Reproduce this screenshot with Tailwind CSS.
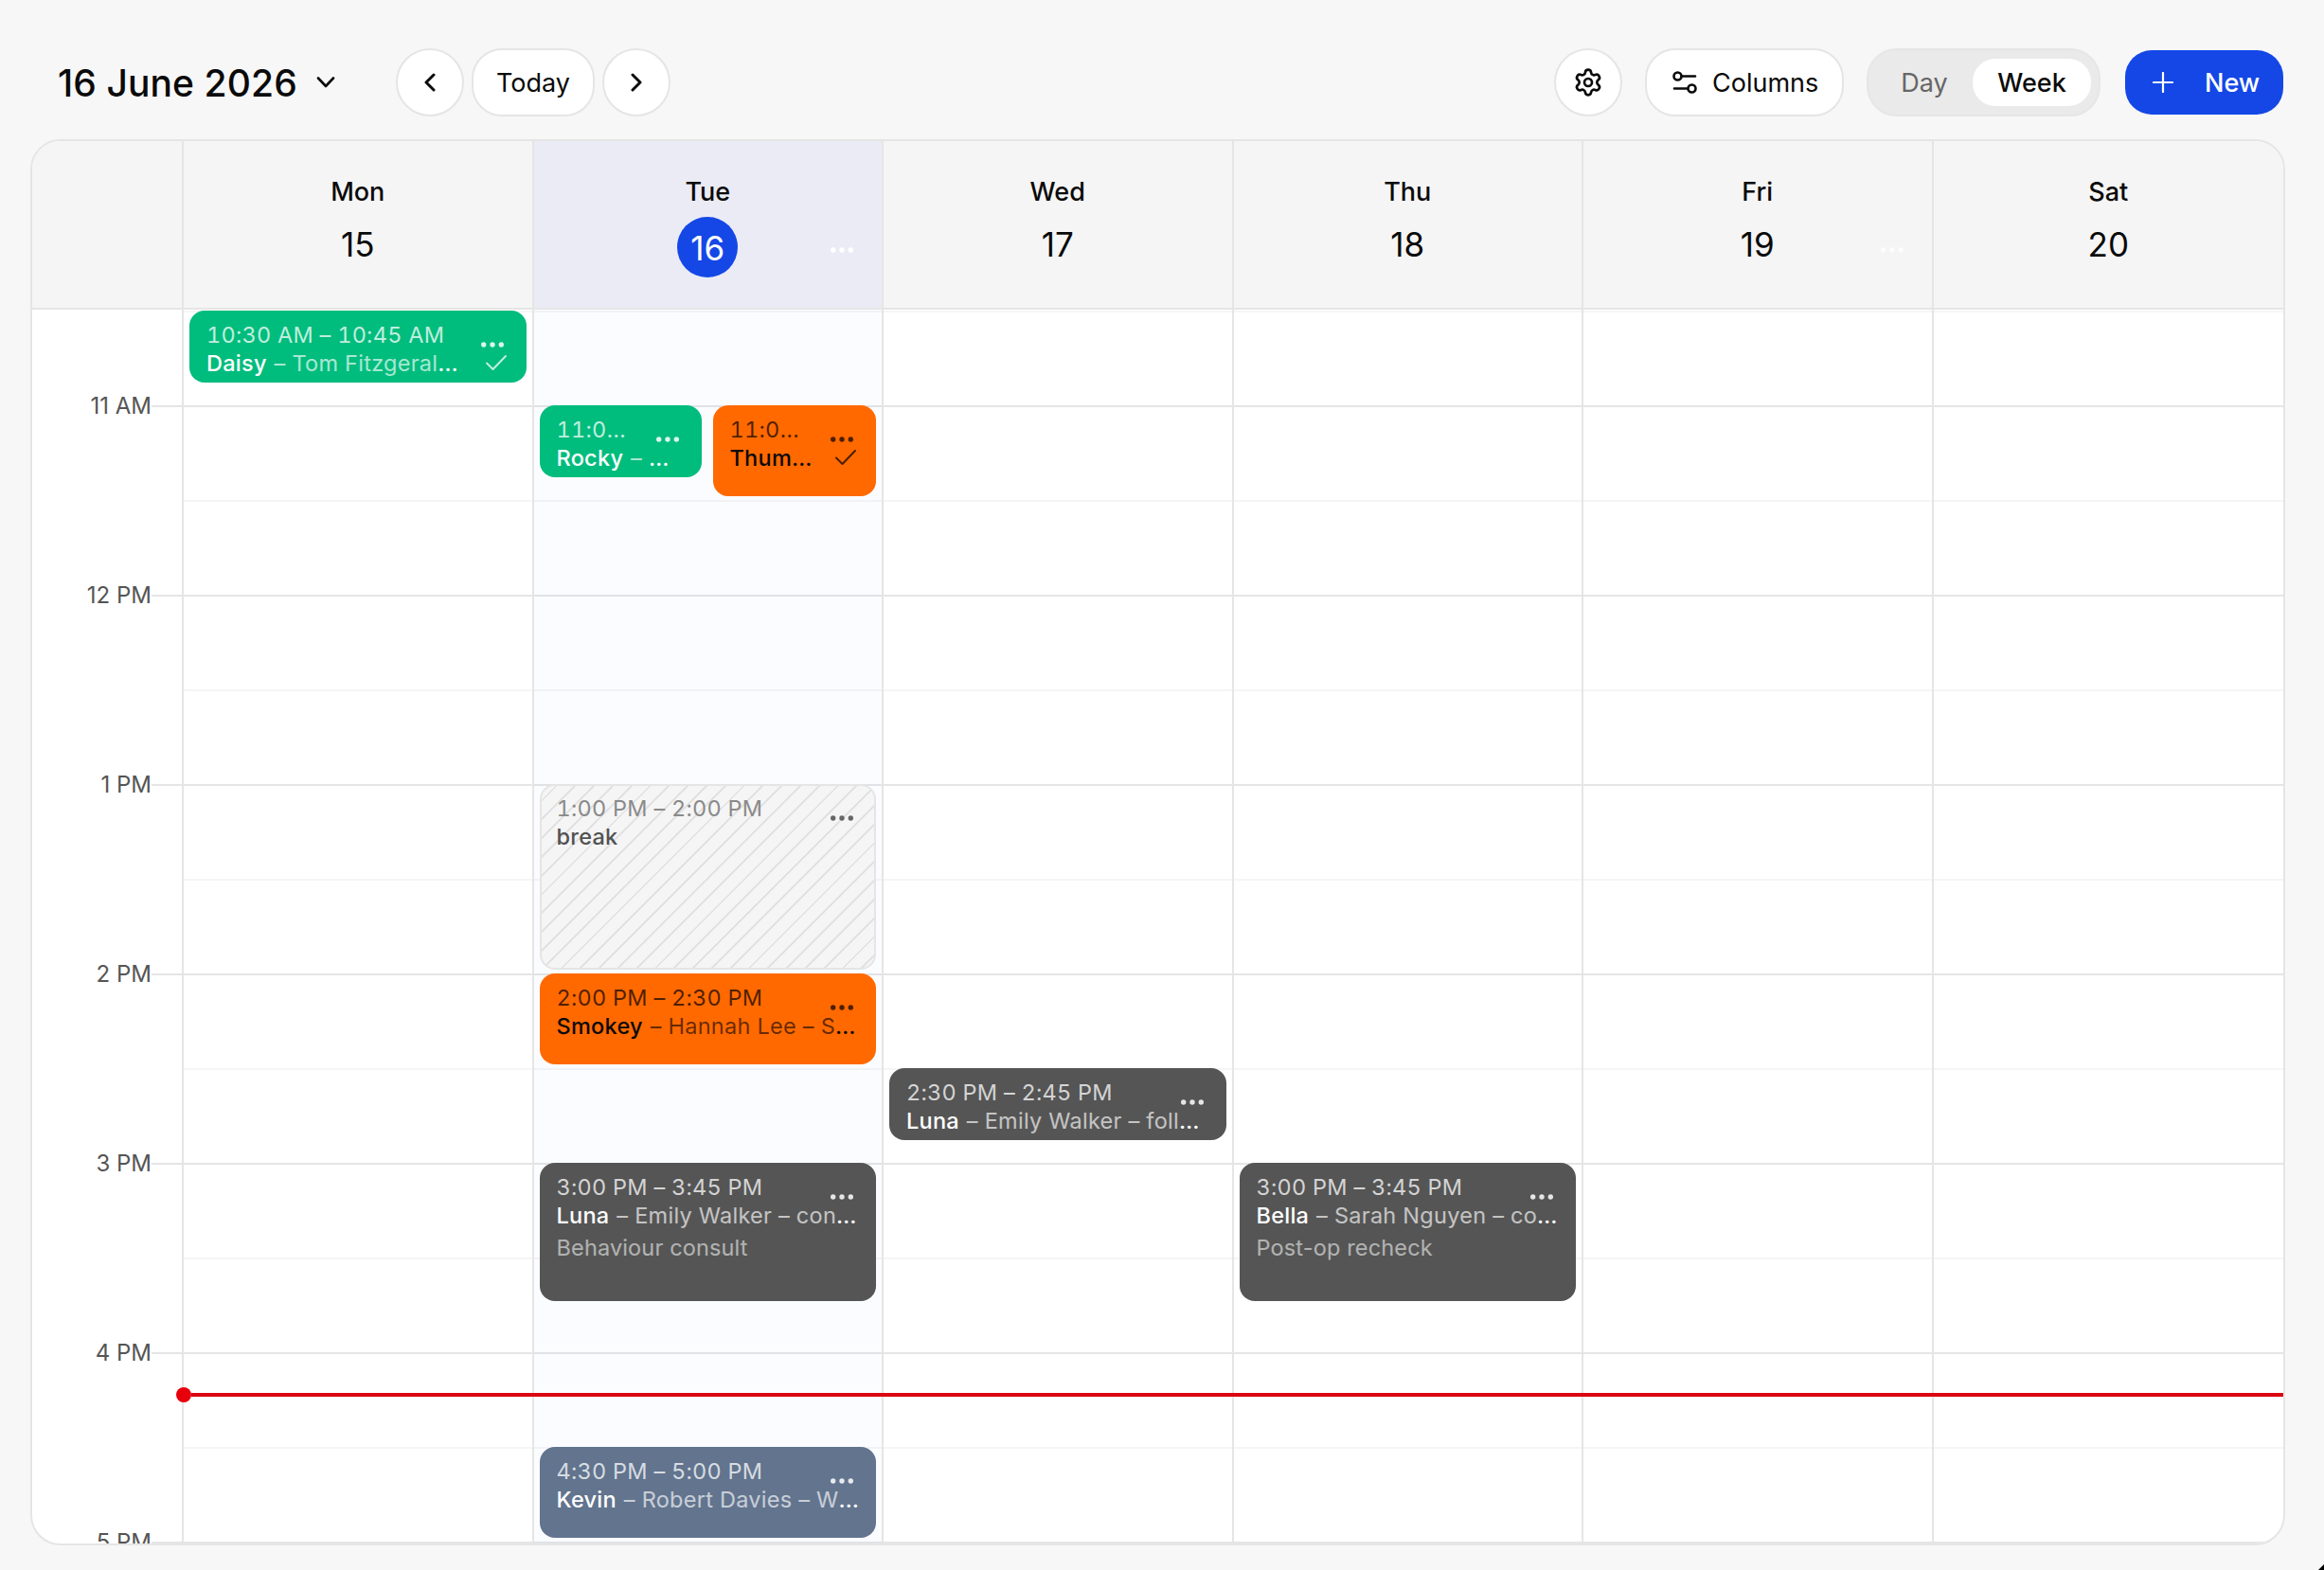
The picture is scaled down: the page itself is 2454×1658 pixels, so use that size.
<!DOCTYPE html>
<html lang="en">
<head>
  <meta charset="UTF-8" />
  <meta name="viewport" content="width=device-width, initial-scale=1.0"/>
  <title>Calendar</title>
  <script src="https://cdn.jsdelivr.net/npm/@tailwindcss/browser@4"></script>
</head>
<body class="relative h-[1658px] w-[2454px] overflow-hidden bg-[#f7f7f7] font-['Inter',sans-serif] text-[#0a0a0a]">
  <!-- shared icons -->
  <svg class="hidden">
    <symbol id="dots" viewBox="0 0 24 6"><circle cx="2.7" cy="3" r="2.7"/><circle cx="12" cy="3" r="2.7"/><circle cx="21.3" cy="3" r="2.7"/></symbol>
    <symbol id="check" viewBox="0 0 24 18"><path d="M2 9.5 8.5 16 22 2" fill="none" stroke="currentColor" stroke-width="2" stroke-linecap="round" stroke-linejoin="round"/></symbol>
  </svg>

  <!-- toolbar -->
  <header class="flex h-[147px] items-center pt-[27px] pr-[43px] pl-[61px]">
    <h1 class="w-[273px] pt-[3px] text-[39px] font-medium tracking-[0.1px] whitespace-nowrap">16 June 2026</h1>
    <svg class="h-3 w-5" viewBox="0 0 20 12" fill="none" stroke="currentColor" stroke-width="2.6" stroke-linecap="round" stroke-linejoin="round"><path d="M2 1.5 10 10l8-8.5"/></svg>
    <div class="ml-16 flex gap-2">
      <button class="flex size-[72px] items-center justify-center rounded-full border-2 border-[#e5e5e5] bg-white">
        <svg class="h-5 w-3" viewBox="0 0 12 20" fill="none" stroke="currentColor" stroke-width="3" stroke-linecap="round" stroke-linejoin="round"><path d="M10 2 2 10l8 8"/></svg>
      </button>
      <button class="h-[72px] w-[130px] rounded-[32px] border-2 border-[#e5e5e5] bg-white pt-[3px] text-[27px]">Today</button>
      <button class="flex size-[72px] items-center justify-center rounded-full border-2 border-[#e5e5e5] bg-white">
        <svg class="h-5 w-3" viewBox="0 0 12 20" fill="none" stroke="currentColor" stroke-width="3" stroke-linecap="round" stroke-linejoin="round"><path d="m2 2 8 8-8 8"/></svg>
      </button>
    </div>

    <div class="ml-auto flex items-center">
      <button class="flex size-[72px] items-center justify-center rounded-full border-2 border-[#e5e5e5] bg-white">
        <svg class="size-8" viewBox="0 0 24 24" fill="none" stroke="currentColor" stroke-width="2" stroke-linecap="round" stroke-linejoin="round"><path d="M9.671 4.136a2.34 2.34 0 0 1 4.659 0 2.34 2.34 0 0 0 3.319 1.915 2.34 2.34 0 0 1 2.33 4.033 2.34 2.34 0 0 0 0 3.831 2.34 2.34 0 0 1-2.33 4.033 2.34 2.34 0 0 0-3.319 1.915 2.34 2.34 0 0 1-4.659 0 2.34 2.34 0 0 0-3.32-1.915 2.34 2.34 0 0 1-2.33-4.033 2.34 2.34 0 0 0 0-3.831A2.34 2.34 0 0 1 6.35 6.051a2.34 2.34 0 0 0 3.319-1.915"/><circle cx="12" cy="12" r="3"/></svg>
      </button>
      <button class="ml-6 flex h-[72px] w-[210px] items-center rounded-[32px] border-2 border-[#e5e5e5] bg-white pl-[27px] text-[27px]">
        <svg class="mr-4 h-6 w-[26px]" viewBox="0 0 26 24" fill="none" stroke="currentColor" stroke-width="2.6" stroke-linecap="round"><circle cx="5.5" cy="5.5" r="4"/><path d="M9.5 5.5H24M2 18.5h14"/><circle cx="20.5" cy="18.5" r="4"/></svg>
        <span class="pt-[3px]">Columns</span>
      </button>
      <div class="ml-6 flex h-[72px] w-[247px] items-center rounded-[32px] border-2 border-[#e6e6e6] bg-[#eaeaea] text-[27px]">
        <span class="w-[110px] pt-[3px] pl-2 text-center text-[#666]">Day</span>
        <span class="flex h-[50px] w-[125px] items-center justify-center rounded-[24px] bg-white pt-[3px] font-medium">Week</span>
      </div>
      <button class="ml-[26px] flex h-[68px] w-[167px] items-center rounded-[28px] bg-[#1447e6] pl-[29px] text-[27px] font-medium text-white">
        <svg class="mr-[33px] size-[22px]" viewBox="0 0 22 22" stroke="currentColor" stroke-width="2.2" stroke-linecap="round"><path d="M11 1v20M1 11h20"/></svg>
        <span class="pt-[3px]">New</span>
      </button>
    </div>
  </header>

  <!-- week grid -->
  <main class="ml-8 h-[1485px] w-[2381px] overflow-hidden rounded-[32px] border-2 border-[#e5e5e5] bg-white">
    <div class="flex h-[178px] border-b-2 border-[#e5e5e5] bg-[#f5f5f5] text-center text-[27px] font-medium">
      <div class="w-40 border-r-2 border-[#e5e5e5]"></div>
      <div class="grid flex-1 grid-cols-6">
        <div class="border-r-2 border-[#e5e5e5] pt-[38px]"><p class="leading-8">Mon</p><p class="mt-3 text-[35px] leading-[54px] font-normal">15</p></div>
        <div class="relative border-r-2 border-[#e5e5e5] bg-[#ebebf5] pt-[38px]">
          <p class="leading-8">Tue</p>
          <p class="mx-auto mt-[10px] size-16 rounded-full bg-[#1447e6] text-[35px] leading-[67px] font-normal text-white">16</p>
          <svg class="absolute top-[112px] right-[30px] h-[6px] w-6 fill-white"><use href="#dots"/></svg>
        </div>
        <div class="border-r-2 border-[#e5e5e5] pt-[38px]"><p class="leading-8">Wed</p><p class="mt-3 text-[35px] leading-[54px] font-normal">17</p></div>
        <div class="border-r-2 border-[#e5e5e5] pt-[38px]"><p class="leading-8">Thu</p><p class="mt-3 text-[35px] leading-[54px] font-normal">18</p></div>
        <div class="relative border-r-2 border-[#e5e5e5] pt-[38px]">
          <p class="leading-8">Fri</p><p class="mt-3 text-[35px] leading-[54px] font-normal">19</p>
          <svg class="absolute top-[112px] right-[30px] h-[6px] w-6 fill-white/80"><use href="#dots"/></svg>
        </div>
        <div class="pt-[38px]"><p class="leading-8">Sat</p><p class="mt-3 text-[35px] leading-[54px] font-normal">20</p></div>
      </div>
    </div>

    <div class="relative flex h-[1303px]">
      <!-- hour labels -->
      <div class="w-40 border-r-2 border-[#e5e5e5] pt-[87px] text-[24px] text-[#555]">
        <div class="flex h-[200px] items-start"><span class="w-[126px] text-right leading-[30px]">11 AM</span><i class="mt-[14px] h-0.5 flex-1 bg-[#e5e5e5]"></i></div>
        <div class="flex h-[200px] items-start"><span class="w-[126px] text-right leading-[30px]">12 PM</span><i class="mt-[14px] h-0.5 flex-1 bg-[#e5e5e5]"></i></div>
        <div class="flex h-[200px] items-start"><span class="w-[126px] text-right leading-[30px]">1 PM</span><i class="mt-[14px] h-0.5 flex-1 bg-[#e5e5e5]"></i></div>
        <div class="flex h-[200px] items-start"><span class="w-[126px] text-right leading-[30px]">2 PM</span><i class="mt-[14px] h-0.5 flex-1 bg-[#e5e5e5]"></i></div>
        <div class="flex h-[200px] items-start"><span class="w-[126px] text-right leading-[30px]">3 PM</span><i class="mt-[14px] h-0.5 flex-1 bg-[#e5e5e5]"></i></div>
        <div class="flex h-[200px] items-start"><span class="w-[126px] text-right leading-[30px]">4 PM</span><i class="mt-[14px] h-0.5 flex-1 bg-[#e5e5e5]"></i></div>
        <div class="flex items-start"><span class="w-[126px] text-right leading-[30px]">5 PM</span><i class="mt-[14px] h-0.5 flex-1 bg-[#e5e5e5]"></i></div>
      </div>

      <!-- day columns, hour and half hour lines are a repeating background -->
      <div class="grid flex-1 grid-cols-6 bg-[linear-gradient(#f5f5f5_2px,transparent_2px),linear-gradient(#e5e5e5_2px,transparent_2px)] bg-[size:100%_200px] bg-[position:0_1px,0_101px] text-[23.5px] leading-[30px] tracking-[0.26px] whitespace-nowrap">
        <div class="relative border-r-2 border-[#e5e5e5]">
          <article class="absolute top-px left-[6px] h-[76px] w-[356px] rounded-2xl bg-[#00bc7d] px-[18px] pt-[11px] text-white">
            <p class="tracking-[0.25px] text-white/75 tabular-nums">10:30 AM – 10:45 AM</p>
            <p class="font-medium">Daisy<span class="ml-px font-normal text-white/65"> – Tom Fitzgeral</span>…</p>
            <svg class="absolute top-[33px] right-6 h-[6px] w-6 fill-white/85"><use href="#dots"/></svg>
            <svg class="absolute top-[46px] right-5 h-[18px] w-6 text-white/75"><use href="#check"/></svg>
          </article>
        </div>

        <div class="relative border-r-2 border-[#e5e5e5] bg-[#1447e6]/[0.015]">
          <article class="absolute top-[101px] left-[6px] h-[76px] w-[171px] rounded-2xl bg-[#00bc7d] px-[18px] pt-[11px] text-white">
            <p class="tracking-[0.25px] text-white/75 tabular-nums">11:0…</p>
            <p class="font-medium">Rocky<span class="ml-px font-normal text-white/65"> – </span>…</p>
            <svg class="absolute top-[33px] right-6 h-[6px] w-6 fill-white/85"><use href="#dots"/></svg>
          </article>
          <article class="absolute top-[101px] left-[189px] h-24 w-[172px] rounded-2xl bg-[#ff6900] px-[18px] pt-[11px] text-[#0a0a0a]">
            <p class="tracking-[0.25px] text-black/70 tabular-nums">11:0…</p>
            <p class="font-medium">Thum…</p>
            <svg class="absolute top-[33px] right-6 h-[6px] w-6 fill-black/70"><use href="#dots"/></svg>
            <svg class="absolute top-[46px] right-5 h-[18px] w-6 text-black/70"><use href="#check"/></svg>
          </article>
          <article class="absolute top-[501px] left-[6px] h-[196px] w-[355px] rounded-2xl border-2 border-[#e5e5e5] bg-[#f5f5f5] bg-[repeating-linear-gradient(135deg,transparent_0_10px,#e2e2e2_10px_12px,transparent_12px_14px)] px-4 pt-[9px] text-[#525252]">
            <p class="tracking-[0.25px] text-[#8a8a8a] tabular-nums">1:00 PM – 2:00 PM</p>
            <p class="font-medium">break</p>
            <svg class="absolute top-[31px] right-[22px] h-[6px] w-6 fill-[#666]"><use href="#dots"/></svg>
          </article>
          <article class="absolute top-[701px] left-[6px] h-24 w-[355px] rounded-2xl bg-[#ff6900] px-[18px] pt-[11px] text-[#0a0a0a]">
            <p class="tracking-[0.25px] text-black/70 tabular-nums">2:00 PM – 2:30 PM</p>
            <p class="font-medium">Smokey<span class="ml-px font-normal text-black/60"> – Hannah Lee – S</span>…</p>
            <svg class="absolute top-[33px] right-6 h-[6px] w-6 fill-black/70"><use href="#dots"/></svg>
          </article>
          <article class="absolute top-[901px] left-[6px] h-[146px] w-[355px] rounded-2xl bg-[#555] px-[18px] pt-[11px] text-white">
            <p class="tracking-[0.25px] text-white/75 tabular-nums">3:00 PM – 3:45 PM</p>
            <p class="font-medium">Luna<span class="ml-px font-normal text-white/65"> – Emily Walker – con</span>…</p>
            <p class="mt-1 tracking-[0.15px] text-white/55">Behaviour consult</p>
            <svg class="absolute top-[33px] right-6 h-[6px] w-6 fill-white/85"><use href="#dots"/></svg>
          </article>
          <article class="absolute top-[1201px] left-[6px] h-24 w-[355px] rounded-2xl bg-[#62748e] px-[18px] pt-[11px] text-white">
            <p class="tracking-[0.25px] text-white/75 tabular-nums">4:30 PM – 5:00 PM</p>
            <p class="font-medium">Kevin<span class="ml-px font-normal text-white/65"> – Robert Davies – W</span>…</p>
            <svg class="absolute top-[33px] right-6 h-[6px] w-6 fill-white/85"><use href="#dots"/></svg>
          </article>
        </div>

        <div class="relative border-r-2 border-[#e5e5e5]">
          <article class="absolute top-[801px] left-[6px] h-[76px] w-[356px] rounded-2xl bg-[#555] px-[18px] pt-[11px] text-white">
            <p class="tracking-[0.25px] text-white/75 tabular-nums">2:30 PM – 2:45 PM</p>
            <p class="font-medium">Luna<span class="ml-px font-normal text-white/65"> – Emily Walker – foll</span>…</p>
            <svg class="absolute top-[33px] right-6 h-[6px] w-6 fill-white/85"><use href="#dots"/></svg>
          </article>
        </div>

        <div class="relative border-r-2 border-[#e5e5e5]">
          <article class="absolute top-[901px] left-[6px] h-[146px] w-[355px] rounded-2xl bg-[#555] px-[18px] pt-[11px] text-white">
            <p class="tracking-[0.25px] text-white/75 tabular-nums">3:00 PM – 3:45 PM</p>
            <p class="font-medium">Bella<span class="ml-px font-normal text-white/65"> – Sarah Nguyen – co</span>…</p>
            <p class="mt-1 tracking-[0.15px] text-white/55">Post-op recheck</p>
            <svg class="absolute top-[33px] right-6 h-[6px] w-6 fill-white/85"><use href="#dots"/></svg>
          </article>
        </div>

        <div class="border-r-2 border-[#e5e5e5]"></div>
        <div></div>
      </div>

      <!-- current time -->
      <div class="absolute top-[1138px] right-0 left-[152px] flex h-4 items-center">
        <span class="size-4 rounded-full bg-[#e7000b]"></span>
        <span class="h-1 flex-1 bg-[#db0512]"></span>
      </div>
    </div>
  </main>

  <svg class="absolute right-0 bottom-0 size-[6px]" viewBox="0 0 6 6"><path d="M6 0v6H0z"/></svg>
</body>
</html>
